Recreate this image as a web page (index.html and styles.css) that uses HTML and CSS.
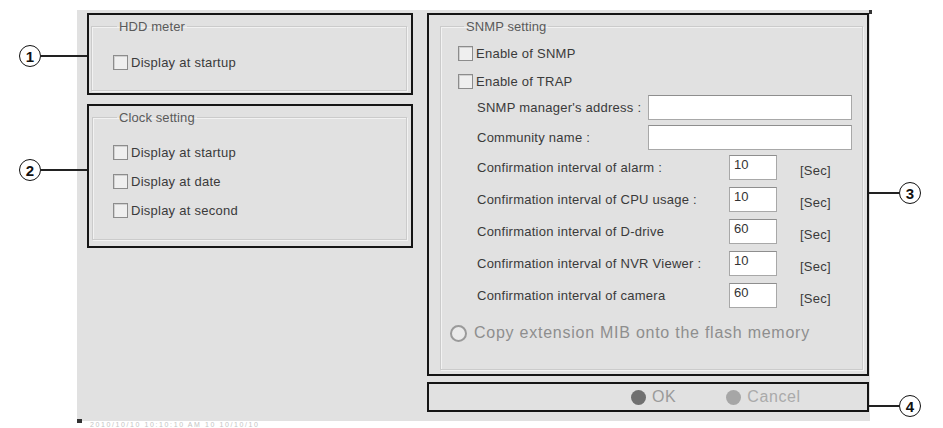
FILE: index.html
```html
<!DOCTYPE html>
<html lang="en">
<head>
    <meta charset="UTF-8">
    <meta name="viewport" content="width=device-width, initial-scale=1.0">
    <title>Setting</title>
    <link rel="stylesheet" href="styles.css">
</head>
<body>
    <div class="stage">
        <div class="panel">
            <div class="col-left">
                <section class="frame frame-hdd">
                    <fieldset class="group group-hdd">
                        <legend>HDD meter</legend>
                        <label class="check"><span class="box"></span>Display at startup</label>
                    </fieldset>
                </section>
                <section class="frame frame-clock">
                    <fieldset class="group group-clock">
                        <legend>Clock setting</legend>
                        <label class="check"><span class="box"></span>Display at startup</label>
                        <label class="check"><span class="box"></span>Display at date</label>
                        <label class="check"><span class="box"></span>Display at second</label>
                    </fieldset>
                </section>
            </div>

            <div class="col-right">
                <section class="frame frame-snmp">
                    <fieldset class="group group-snmp">
                        <legend>SNMP setting</legend>
                        <label class="check"><span class="box"></span>Enable of SNMP</label>
                        <label class="check"><span class="box"></span>Enable of TRAP</label>

                        <div class="field field-text">
                            <span class="field-label">SNMP manager's address :</span>
                            <input type="text" class="input input-wide" value="">
                        </div>
                        <div class="field field-text">
                            <span class="field-label">Community name :</span>
                            <input type="text" class="input input-wide" value="">
                        </div>

                        <div class="intervals">
                            <div class="field field-num">
                                <span class="field-label">Confirmation interval of alarm :</span>
                                <input type="text" class="input input-num" value="10">
                                <span class="unit">[Sec]</span>
                            </div>
                            <div class="field field-num">
                                <span class="field-label">Confirmation interval of CPU usage :</span>
                                <input type="text" class="input input-num" value="10">
                                <span class="unit">[Sec]</span>
                            </div>
                            <div class="field field-num">
                                <span class="field-label">Confirmation interval of D-drive</span>
                                <input type="text" class="input input-num" value="60">
                                <span class="unit">[Sec]</span>
                            </div>
                            <div class="field field-num">
                                <span class="field-label">Confirmation interval of NVR Viewer :</span>
                                <input type="text" class="input input-num" value="10">
                                <span class="unit">[Sec]</span>
                            </div>
                            <div class="field field-num">
                                <span class="field-label">Confirmation interval of camera</span>
                                <input type="text" class="input input-num" value="60">
                                <span class="unit">[Sec]</span>
                            </div>
                        </div>

                        <div class="radio-row">
                            <span class="radio"></span>Copy extension MIB onto the flash memory
                        </div>
                    </fieldset>
                </section>

                <section class="frame frame-buttons">
                    <span class="btn btn-ok"><span class="dot"></span>OK</span>
                    <span class="btn btn-cancel"><span class="dot"></span>Cancel</span>
                </section>
            </div>
        </div>

        <div class="status">2010/10/10 10:10:10 AM 10 10/10/10</div>

        <!-- callout markers -->
        <div class="callout callout-left callout-1"><span class="num">1</span><span class="line"></span></div>
        <div class="callout callout-left callout-2"><span class="num">2</span><span class="line"></span></div>
        <div class="callout callout-right callout-3"><span class="line"></span><span class="num">3</span></div>
        <div class="callout callout-right callout-4"><span class="line"></span><span class="num">4</span></div>
    </div>
</body>
</html>
```

FILE: styles.css
```css
body {
    margin: 0;
    background-color: #ffffff;
    font-family: "Liberation Sans", Arial, sans-serif;
}
.stage {
    position: relative;
    width: 943px;
    height: 428px;
    overflow: hidden;
    padding-top: 10px;
    box-sizing: border-box;
}
.panel {
    position: relative;
    margin-left: 77px;
    width: 793px;
    height: 411px;
    box-sizing: border-box;
    padding: 3px 0 0 10px;
    background-color: #e1e1e1;
    display: flex;
}
/* little dark corners from the window shadow */
.panel::before {
    content: "";
    position: absolute;
    right: -2px;
    top: 0;
    width: 3px;
    height: 4px;
    background-color: #333;
}
.panel::after {
    content: "";
    position: absolute;
    left: 0;
    bottom: -2px;
    width: 5px;
    height: 4px;
    background-color: #333;
}
.col-left {
    width: 326px;
    display: flex;
    flex-direction: column;
    gap: 9px;
}
.col-right {
    width: 442px;
    margin-left: 14px;
    display: flex;
    flex-direction: column;
    gap: 6px;
}
.frame {
    border: 2px solid #151515;
    box-sizing: border-box;
    display: flex;
    flex-direction: column;
}
.frame-hdd {
    height: 82px;
}
.frame-clock {
    height: 144px;
}
.frame-snmp {
    height: 363px;
}
.frame-buttons {
    height: 30px;
    flex-direction: row;
    align-items: center;
    padding-left: 202px;
}

/* group boxes */
.group {
    flex: 1;
    border: 1px solid #cbcbcb;
    box-shadow: inset 1px 1px 0 #f2f2f2, 1px 1px 0 #f2f2f2;
    padding: 0;
    min-width: 0;
}
.group legend {
    font-size: 13px;
    line-height: 13px;
    color: #5a5a5a;
    padding: 0 2px;
    margin-left: 4px;
    letter-spacing: 0.1px;
}
.group-hdd {
    margin: 5px 4px 2px 2px;
    padding: 15px 0 0 21px;
}
.group-clock {
    margin: 5px 4px 6px 3px;
    padding: 14px 0 0 20px;
}
.group-snmp {
    margin: 5px 4px 4px 11px;
    padding: 6px 0 0 17px;
}
.group-snmp legend {
    margin-left: 6px;
}

/* checkboxes */
.check {
    display: flex;
    align-items: center;
    height: 28px;
    font-size: 13px;
    letter-spacing: 0.25px;
    color: #3a3a3a;
}
.group-clock .check {
    height: 29px;
}
.box {
    width: 13px;
    height: 13px;
    border: 1px solid #8c8c8c;
    background-color: #efefef;
    box-shadow: inset 1px 1px 0 #d0d0d0;
    margin-right: 3px;
    flex-shrink: 0;
}

/* fields */
.field {
    display: flex;
    align-items: center;
    height: 25px;
    padding-left: 19px;
    font-size: 13px;
    letter-spacing: 0.25px;
    color: #3a3a3a;
}
.field-text {
    margin-bottom: 5px;
}
.field-text .field-label {
    width: 171px;
}
.intervals {
    display: flex;
    flex-direction: column;
    gap: 7px;
    margin-top: 4px;
}
.field-num .field-label {
    width: 252px;
}
.input {
    font-family: "Liberation Sans", Arial, sans-serif;
    font-size: 13px;
    color: #333;
    height: 25px;
    box-sizing: border-box;
    border: 1px solid #a8a8a8;
    border-top-color: #8e8e8e;
    background-color: #ffffff;
    padding: 0 0 6px 4px;
    margin: 0;
    outline: none;
}
.input-wide {
    width: 204px;
}
.input-num {
    width: 48px;
}
.unit {
    margin-left: 23px;
    padding-top: 6px;
}

/* radio */
.radio-row {
    display: flex;
    align-items: center;
    height: 24px;
    margin: 13px 0 0 -8px;
    font-size: 16px;
    letter-spacing: 0.75px;
    color: #8e8e8e;
}
.radio {
    width: 13px;
    height: 13px;
    border: 2px solid #9a9a9a;
    border-radius: 50%;
    background-color: #eaeaea;
    margin-right: 7px;
}

/* buttons */
.btn {
    display: flex;
    align-items: center;
    font-size: 16px;
    letter-spacing: 0.6px;
    color: #9a9a9a;
}
.btn-ok {
    margin-right: 50px;
}
.dot {
    width: 15px;
    height: 15px;
    border-radius: 50%;
    margin-right: 6px;
}
.btn-ok .dot {
    background-color: #707070;
}
.btn-cancel .dot {
    background-color: #a6a6a6;
}
.btn-cancel {
    color: #aaaaaa;
}

.status {
    margin: 0 0 0 90px;
    font-size: 7px;
    line-height: 7px;
    color: #c4c4c4;
    letter-spacing: 1.6px;
}

/* callouts */
.callout {
    position: absolute;
    display: flex;
    align-items: center;
}
.callout-left {
    left: 19px;
}
.callout-right {
    left: 869px;
}
.callout-1 {
    top: 45px;
}
.callout-2 {
    top: 159px;
}
.callout-3 {
    top: 182px;
}
.callout-4 {
    top: 395px;
}
.callout-left .line {
    width: 46px;
}
.callout-right .line {
    width: 30px;
}
.line {
    height: 2px;
    background-color: #222;
}
.num {
    width: 22px;
    height: 22px;
    border: 1.5px solid #111;
    border-radius: 50%;
    box-sizing: border-box;
    display: flex;
    align-items: center;
    justify-content: center;
    font-size: 15px;
    font-weight: bold;
    color: #111;
    font-family: "Liberation Sans", Arial, sans-serif;
}
```
